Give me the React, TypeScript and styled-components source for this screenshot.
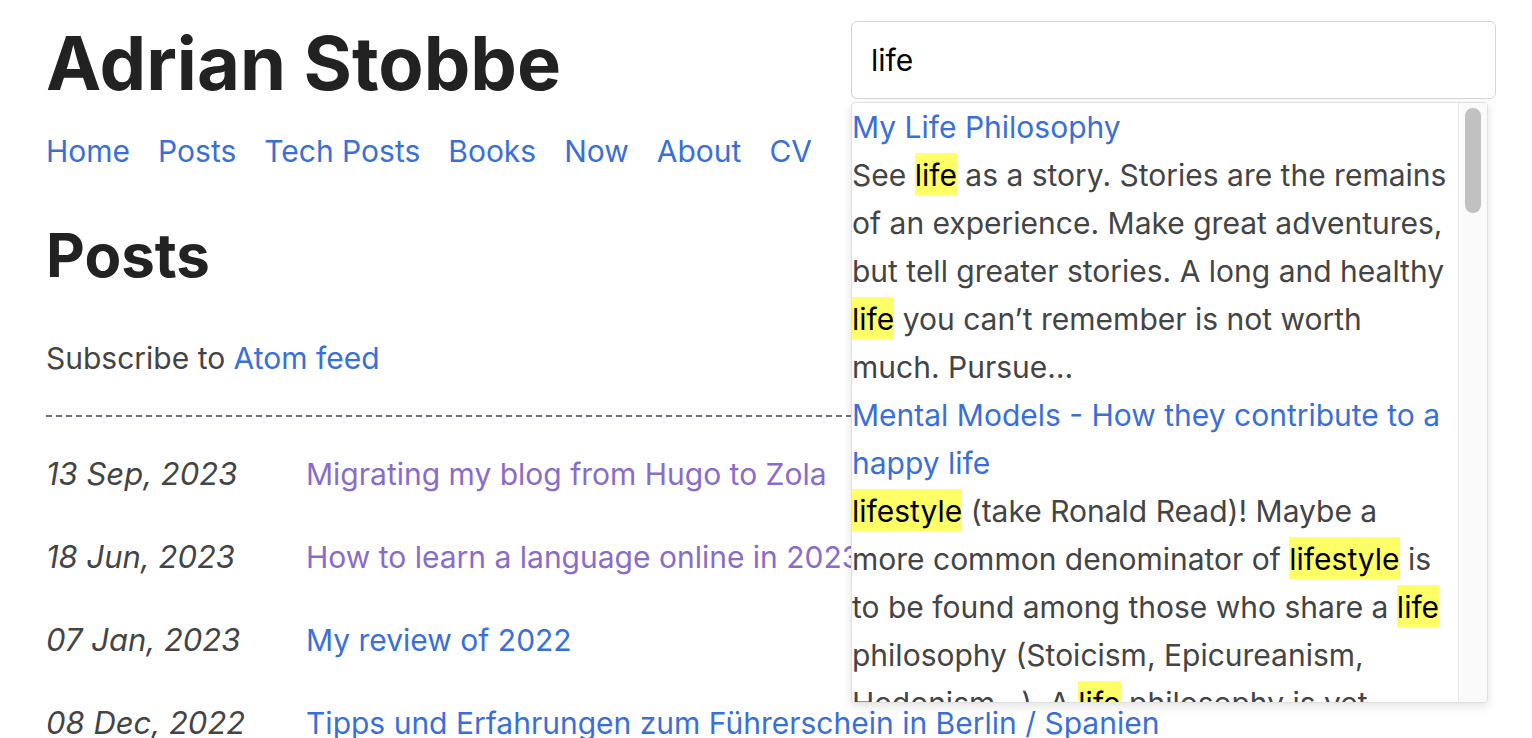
import React, { useEffect, useRef } from "react";
import styled, { createGlobalStyle } from "styled-components";

const GlobalStyle = createGlobalStyle`
  html, body {
    margin: 0;
    padding: 0;
    background: #ffffff;
  }
  body {
    font-family: Inter, "Liberation Sans", sans-serif;
    font-size: 30px;
    line-height: 48px;
    color: #444444;
  }
`;

const Page = styled.div`
  padding: 0 36px 0 46px;
`;

const Header = styled.header`
  display: flex;
  justify-content: space-between;
  align-items: flex-start;
`;

const Brand = styled.div`
  padding-top: 26px;
`;

const SiteTitle = styled.h1`
  margin: 0;
  font-size: 74px;
  line-height: 74px;
  font-weight: 700;
  color: #222222;
`;

const Nav = styled.nav`
  display: flex;
  gap: 28px;
  margin-top: 27px;
  line-height: 48px;
`;

const Link = styled.a<{ $visited?: boolean }>`
  color: ${(p) => (p.$visited ? "#8a6cc8" : "#3a6fd8")};
  text-decoration: none;
`;

const Search = styled.div`
  position: relative;
  width: 645px;
  margin-top: 21px;
`;

const SearchInput = styled.input`
  box-sizing: border-box;
  display: block;
  width: 100%;
  height: 78px;
  margin: 0;
  padding: 0 19px;
  border: 1px solid #d6d6d6;
  border-radius: 6px;
  background: #ffffff;
  font-family: Inter, "Liberation Sans", sans-serif;
  font-size: 30px;
  color: #000000;
  caret-color: #000000;
  outline: none;
`;

const Dropdown = styled.div`
  position: absolute;
  top: calc(100% + 3px);
  left: 0;
  z-index: 10;
  display: flex;
  box-sizing: border-box;
  width: 637px;
  height: 601px;
  border: 1px solid #e0e0e0;
  border-radius: 4px;
  background: #ffffff;
  box-shadow: 0 3px 10px rgba(0, 0, 0, 0.12);
  overflow: hidden;
`;

const ResultList = styled.div`
  flex: 1;
  min-width: 0;
  padding-right: 6px;
  overflow: hidden;
`;

const ScrollTrack = styled.div`
  flex: none;
  box-sizing: border-box;
  width: 29px;
  padding: 5px 6px 0;
  background: #fafafa;
  border-left: 1px solid #e6e6e6;
`;

const ScrollThumb = styled.div`
  height: 105px;
  border-radius: 8px;
  background: #c1c1c1;
`;

const Result = styled.div`
  line-height: 48px;
`;

const ResultTitle = styled.a`
  display: block;
  color: #3a6fd8;
  text-decoration: none;
`;

const Excerpt = styled.div`
  color: #444444;
`;

const Hit = styled.mark`
  background: #ffff66;
  color: #000000;
  padding: 4px 0 2px;
`;

const Main = styled.main`
  margin-right: 10px;
`;

const PageTitle = styled.h2`
  margin: 50px 0 0;
  font-size: 60px;
  line-height: 60px;
  font-weight: 700;
  color: #222222;
`;

const Subscribe = styled.p`
  margin: 49px 0 0;
`;

const Divider = styled.div`
  margin-top: 33px;
  height: 2px;
  background: repeating-linear-gradient(
    to right,
    #6f727b 0 6px,
    transparent 6px 10px
  );
`;

const PostList = styled.div`
  display: grid;
  grid-template-columns: 260px 1fr;
  row-gap: 35px;
  margin-top: 33px;
  line-height: 48px;
`;

const PostDate = styled.time`
  font-style: italic;
  font-size: 31px;
  color: #444444;
`;

type Piece = string | { hit: string };

const results: { title: string; excerpt: Piece[] }[] = [
  {
    title: "My Life Philosophy",
    excerpt: [
      "See ",
      { hit: "life" },
      " as a story. Stories are the remains of an experience. Make great adventures, but tell greater stories. A long and healthy ",
      { hit: "life" },
      " you can’t remember is not worth much. Pursue…",
    ],
  },
  {
    title: "Mental Models - How they contribute to a happy life",
    excerpt: [
      { hit: "lifestyle" },
      " (take Ronald Read)! Maybe a more common denominator of ",
      { hit: "lifestyle" },
      " is to be found among those who share a ",
      { hit: "life" },
      " philosophy (Stoicism, Epicureanism, Hedonism…). A ",
      { hit: "life" },
      " philosophy is yet another mental model that shapes how we decide…",
    ],
  },
  {
    title: "My review of 2022",
    excerpt: [
      "A year full of change. I moved to a new city, started a new job and learned that my daily ",
      { hit: "life" },
      " is mostly shaped by small habits. Looking back, the moments I remember most are…",
    ],
  },
  {
    title: "Books that shaped my thinking",
    excerpt: [
      "Some books change how you look at ",
      { hit: "life" },
      ". These are the ones I keep coming back to, with short notes on what I took away from each of them…",
    ],
  },
];

const navItems = ["Home", "Posts", "Tech Posts", "Books", "Now", "About", "CV"];

const posts = [
  { date: "13 Sep, 2023", title: "Migrating my blog from Hugo to Zola", visited: true },
  { date: "18 Jun, 2023", title: "How to learn a language online in 2023", visited: true },
  { date: "07 Jan, 2023", title: "My review of 2022", visited: false },
  { date: "08 Dec, 2022", title: "Tipps und Erfahrungen zum Führerschein in Berlin / Spanien", visited: false },
  { date: "21 Nov, 2022", title: "Mental Models - How they contribute to a happy life", visited: false },
];

export default function App() {
  const inputRef = useRef<HTMLInputElement>(null);

  useEffect(() => {
    const el = inputRef.current;
    if (el) {
      el.focus();
      el.setSelectionRange(el.value.length, el.value.length);
    }
  }, []);

  return (
    <>
      <GlobalStyle />
      <Page>
        <Header>
          <Brand>
            <SiteTitle>Adrian Stobbe</SiteTitle>
            <Nav>
              {navItems.map((item) => (
                <Link key={item} href="#">
                  {item}
                </Link>
              ))}
            </Nav>
          </Brand>
          <Search>
            <SearchInput ref={inputRef} type="text" defaultValue="life" aria-label="Search" />
            <Dropdown>
              <ResultList>
                {results.map((r) => (
                  <Result key={r.title}>
                    <ResultTitle href="#">{r.title}</ResultTitle>
                    <Excerpt>
                      {r.excerpt.map((piece, i) =>
                        typeof piece === "string" ? (
                          <React.Fragment key={i}>{piece}</React.Fragment>
                        ) : (
                          <Hit key={i}>{piece.hit}</Hit>
                        )
                      )}
                    </Excerpt>
                  </Result>
                ))}
              </ResultList>
              <ScrollTrack aria-hidden="true">
                <ScrollThumb />
              </ScrollTrack>
            </Dropdown>
          </Search>
        </Header>
        <Main>
          <PageTitle>Posts</PageTitle>
          <Subscribe>
            Subscribe to <Link href="#">Atom feed</Link>
          </Subscribe>
          <Divider role="separator" />
          <PostList>
            {posts.map((p) => (
              <React.Fragment key={p.date}>
                <PostDate>{p.date}</PostDate>
                <Link href="#" $visited={p.visited}>
                  {p.title}
                </Link>
              </React.Fragment>
            ))}
          </PostList>
        </Main>
      </Page>
    </>
  );
}
